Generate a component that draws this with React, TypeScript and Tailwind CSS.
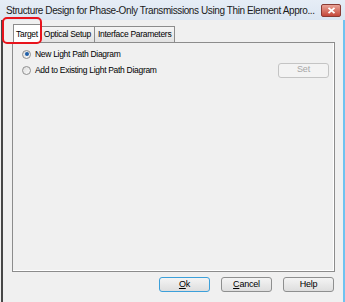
import React from "react";

function Radio({ checked }: { checked?: boolean }) {
  return (
    <span className="relative inline-flex items-center justify-center w-[9px] h-[9px] rounded-full border border-[#8f8f8f] bg-gradient-to-br from-[#dcdcdc] to-[#fbfbfb] shrink-0">
      {checked && <span className="w-[4px] h-[4px] rounded-full bg-[#1f5fa8]" />}
    </span>
  );
}

function Btn({ children, focused, disabled }: { children: React.ReactNode; focused?: boolean; disabled?: boolean }) {
  return (
    <div
      className={
        "w-[51px] h-[15px] flex items-center justify-center rounded-[3px] border text-[9px] tracking-[-0.2px] " +
        (disabled
          ? "border-[#c4c4c4] bg-[#f3f3f3] text-[#a6a6a6]"
          : focused
          ? "border-[#3ca0da] bg-gradient-to-b from-[#f4f4f4] to-[#dedede] text-black"
          : "border-[#8e8f8f] bg-gradient-to-b from-[#f4f4f4] to-[#dedede] text-black")
      }
    >
      {children}
    </div>
  );
}

export default function App() {
  return (
    <div
      className="w-[345px] h-[302px] bg-[#f0f0f0] flex flex-col overflow-hidden relative"
      style={{ fontFamily: "'Liberation Sans', Arial, sans-serif" }}
    >
      {/* title bar */}
      <div className="h-[20px] flex items-center bg-gradient-to-b from-[#e6edf6] to-[#dce6f2] pl-[6px] pr-[4px] shrink-0">
        <span className="text-[10px] text-[#1a1a1a] whitespace-nowrap tracking-[-0.4px] overflow-hidden min-w-0">
          Structure Design for Phase-Only Transmissions Using Thin Element Appro...
        </span>
        <div className="ml-auto shrink-0 w-[20px] h-[13px] rounded-[2px] border border-[#8a3b34] bg-gradient-to-b from-[#e8a398] to-[#c4463a] flex items-center justify-center">
          <svg width="9" height="7" viewBox="0 0 9 7">
            <path d="M1.5 0.8 L7.5 6.2 M7.5 0.8 L1.5 6.2" stroke="#fff" strokeWidth="1.8" />
          </svg>
        </div>
      </div>

      <div className="flex flex-1">
        <div className="w-[2px] bg-[#474747] ml-[1px]" />
        <div className="flex-1 flex flex-col pl-[9px] pr-[8px]">
          {/* tabs */}
          <div className="h-[22px] flex items-end text-[8.5px] text-black tracking-[-0.3px]">
            <div className="h-[19px] px-[2px] flex items-center bg-white border border-b-0 border-[#8c8c8c] relative z-10 -mb-[1px] ml-[1px]">
              Target
            </div>
            <div className="h-[16px] px-[3px] flex items-center bg-gradient-to-b from-[#f5f5f5] to-[#e2e2e2] border border-b-0 border-l-0 border-[#8c8c8c]">
              Optical Setup
            </div>
            <div className="h-[16px] px-[3px] flex items-center bg-gradient-to-b from-[#f5f5f5] to-[#e2e2e2] border border-b-0 border-l-0 border-[#8c8c8c]">
              Interface Parameters
            </div>
          </div>
          {/* panel */}
          <div className="h-[230px] border border-[#8c8c8c] bg-[#f0f0f0] shadow-[inset_-1px_-1px_0_#fff] pt-[3px] pl-[9px] pr-[5px] text-[8.5px] tracking-[-0.3px]">
            <div className="flex items-center gap-[4px] h-[16px]">
              <Radio checked />
              <span>New Light Path Diagram</span>
            </div>
            <div className="flex items-center gap-[4px] h-[16px]">
              <Radio />
              <span>Add to Existing Light Path Diagram</span>
              <div className="ml-auto">
                <Btn disabled>Set</Btn>
              </div>
            </div>
          </div>
          {/* buttons */}
          <div className="flex justify-end gap-[11px] mt-[5px] pr-[1px]">
            <Btn focused><span className="underline">O</span>k</Btn>
            <Btn><span className="underline">C</span>ancel</Btn>
            <Btn>Help</Btn>
          </div>
        </div>
        <div className="w-[2px] bg-[#6fc3f0]" />
      </div>

      {/* red annotation box */}
      <div className="absolute left-[2px] top-[17px] w-[40px] h-[27px] border-[2px] border-[#e8141c] rounded-[5px] z-20" />
    </div>
  );
}
